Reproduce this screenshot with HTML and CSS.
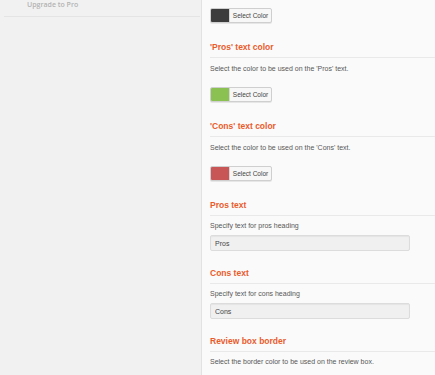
FILE: index.html
```html
<!DOCTYPE html>
<html lang="en">

<head>
    <meta charset="UTF-8">
    <title>Review Settings</title>
    <link rel="stylesheet" href="styles.css">
</head>

<body>
    <div class="layout">
        <div class="sidebar">
            <div class="menu-item">Upgrade to Pro</div>
        </div>

        <div class="main">
            <div class="color-pick first">
                <span class="swatch dark"></span>
                <span class="pick-label">Select Color</span>
            </div>

            <div class="section">
                <h3>'Pros' text color</h3>
                <p class="desc">Select the color to be used on the 'Pros' text.</p>
                <div class="color-pick">
                    <span class="swatch green"></span>
                    <span class="pick-label">Select Color</span>
                </div>
            </div>

            <div class="section">
                <h3>'Cons' text color</h3>
                <p class="desc">Select the color to be used on the 'Cons' text.</p>
                <div class="color-pick">
                    <span class="swatch red"></span>
                    <span class="pick-label">Select Color</span>
                </div>
            </div>

            <div class="section text-section">
                <h3>Pros text</h3>
                <p class="desc">Specify text for pros heading</p>
                <input type="text" value="Pros">
            </div>

            <div class="section text-section">
                <h3>Cons text</h3>
                <p class="desc">Specify text for cons heading</p>
                <input type="text" value="Cons">
            </div>

            <div class="section last">
                <h3>Review box border</h3>
                <p class="desc">Select the border color to be used on the review box.</p>
            </div>
        </div>
    </div>
</body>

</html>
```

FILE: styles.css
```css
body {
    margin: 0;
    font-family: "Liberation Sans", Arial, sans-serif;
    background: #fafafa;
}

.layout {
    display: flex;
    height: 375px;
    overflow: hidden;
}

.sidebar {
    width: 201px;
    background: #f1f1f1;
    border-right: 1px solid #e2e2e2;
    flex-shrink: 0;
}

.menu-item {
    margin: 0 1px 0 4px;
    padding: 0 0 6px 23px;
    font-family: "Open Sans", sans-serif;
    font-size: 7px;
    font-weight: 600;
    line-height: 10px;
    color: #b3b3b3;
    border-bottom: 1px solid #e4e4e4;
}

.main {
    flex: 1;
    padding-left: 8px;
}

.color-pick {
    display: flex;
    width: 60px;
    height: 13px;
    border: 1px solid #cfcfcf;
    border-radius: 2px;
    background: #f7f7f7;
    box-shadow: 0 1px 0 #e6e6e6;
}

.color-pick.first {
    margin-top: 8px;
}

.swatch {
    width: 18px;
    height: 13px;
    border-radius: 1px 0 0 1px;
}

.swatch.dark {
    background: #3c3c3c;
}

.swatch.green {
    background: #8bc152;
}

.swatch.red {
    background: #c95656;
}

.pick-label {
    flex: 1;
    text-align: center;
    font-size: 6.5px;
    line-height: 13px;
    color: #444;
    border-left: 1px solid #d6d6d6;
}

.section {
    padding-top: 19px;
}

.section h3 {
    margin: 0;
    padding-bottom: 5px;
    font-size: 8.5px;
    line-height: 10px;
    color: #ea5a2c;
    border-bottom: 1px solid #e9e9e9;
}

.desc {
    margin: 5px 0 12px;
    font-size: 7px;
    line-height: 12px;
    color: #585858;
}

.text-section + .text-section,
.section.last {
    padding-top: 17px;
}

.text-section .desc {
    margin: 4px 0 3px;
}

.section.last .desc {
    margin-top: 4px;
}

input {
    display: block;
    box-sizing: border-box;
    width: 200px;
    height: 16px;
    margin: 0;
    padding: 0 4px;
    font-family: "Liberation Sans", Arial, sans-serif;
    font-size: 7px;
    color: #444;
    background: #f0f0f0;
    border: 1px solid #dcdcdc;
    border-radius: 2px;
    box-shadow: inset 0 1px 1px #e4e4e4;
}
```
